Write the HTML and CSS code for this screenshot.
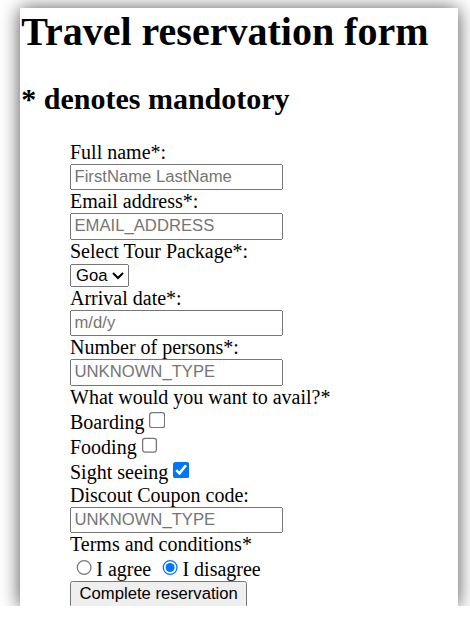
FILE: index.html
```html
<!DOCTYPE html>
<html>
<head>
<meta charset="utf-8">
<title>Travel reservation form</title>
<link rel="stylesheet" href="styles.css">
</head>
<body>
<div class="window">
  <div class="page">
    <h1 class="title">Travel reservation form</h1>
    <h2 class="subtitle">* denotes mandotory</h2>
    <form class="form">
      <label>Full name*:</label><br>
      <input type="text" class="field" placeholder="FirstName LastName"><br>
      <label>Email address*:</label><br>
      <input type="text" class="field" placeholder="EMAIL_ADDRESS"><br>
      <label>Select Tour Package*:</label><br>
      <select class="select"><option>Goa</option></select><br>
      <label>Arrival date*:</label><br>
      <input type="text" class="field" placeholder="m/d/y"><br>
      <label>Number of persons*:</label><br>
      <input type="text" class="field" placeholder="UNKNOWN_TYPE"><br>
      <label>What would you want to avail?*</label><br>
      <label>Boarding</label><input type="checkbox" class="check"><br>
      <label>Fooding</label><input type="checkbox" class="check"><br>
      <label>Sight seeing</label><input type="checkbox" class="check" checked><br>
      <label>Discout Coupon code:</label><br>
      <input type="text" class="field" placeholder="UNKNOWN_TYPE"><br>
      <label>Terms and conditions*</label><br>
      <input type="radio" name="terms" class="radio"><label>I agree</label>
      <input type="radio" name="terms" class="radio" checked><label>I disagree</label><br>
      <button type="button" class="button">Complete reservation</button>
    </form>
  </div>
</div>
</body>
</html>
```

FILE: styles.css
```css
body {
  margin: 0;
  background: #fff;
}

.window {
  margin: 8px 0 0 20px;
  width: 438px;
  height: 598px;
  background: #fff;
  box-shadow: 0 1px 18px rgba(0, 0, 0, 0.7);
  overflow: hidden;
}

.page {
  zoom: 1.25;
  font-family: "Liberation Serif", "Times New Roman", serif;
  font-size: 16px;
  color: #000;
  padding: 0 0 0 1px;
}

.title {
  margin: 0 0 0.67em;
  font-size: 2em;
  font-weight: bold;
}

.subtitle {
  margin: 0.83em 0;
  font-size: 1.5em;
  font-weight: bold;
}

.form {
  margin: 0 0 0 39px;
}

.field,
.select,
.button {
  font-family: "Liberation Sans", Arial, sans-serif;
  font-size: 13.333px;
}

.field {
  box-sizing: border-box;
  width: 170px;
}
```
